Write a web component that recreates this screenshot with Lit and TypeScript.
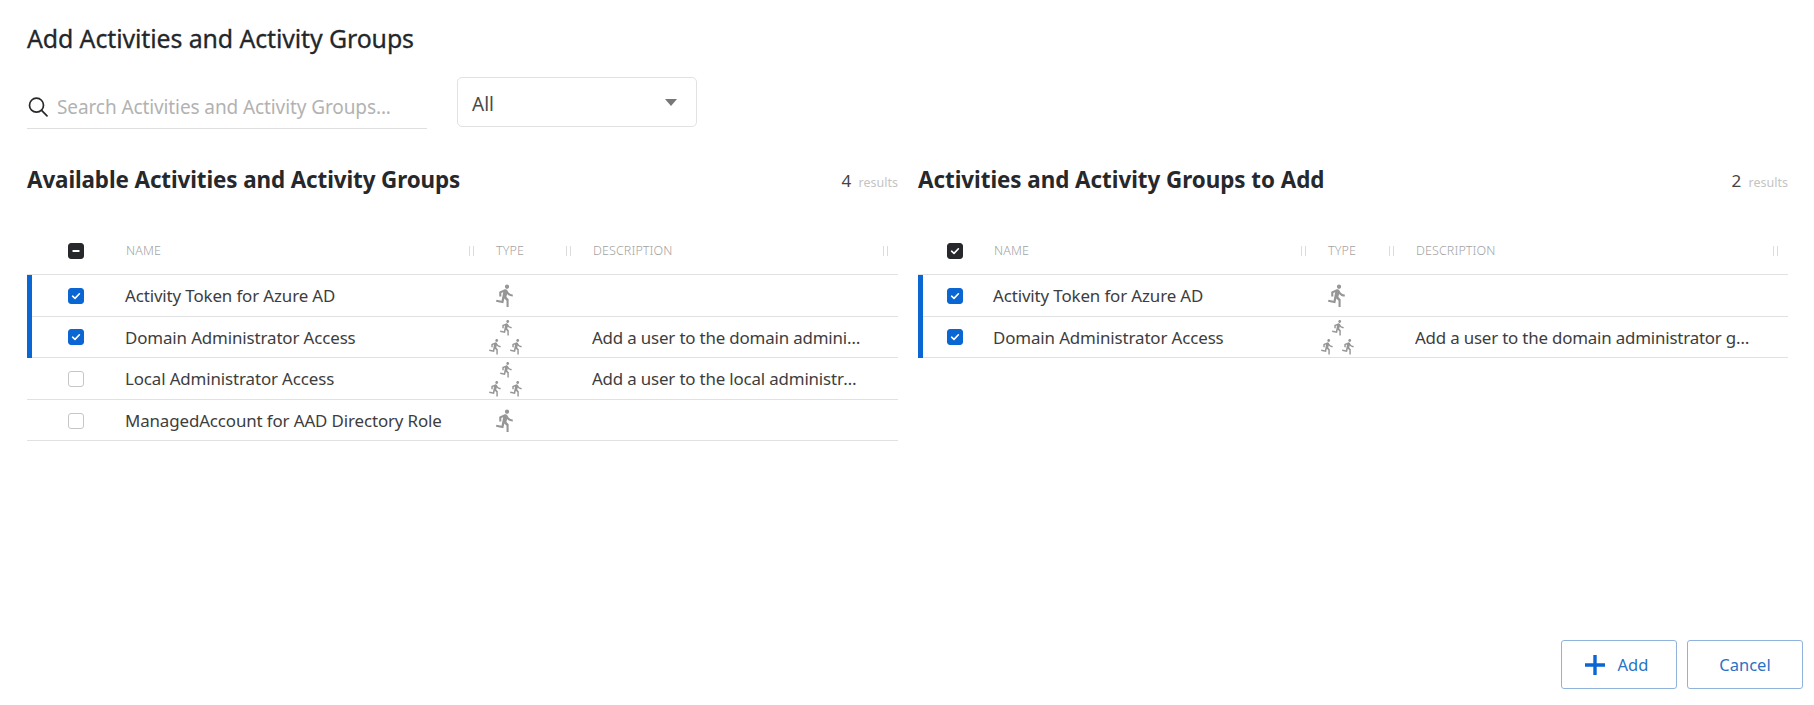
import { LitElement, html, css, svg } from "lit";
import { customElement } from "lit/decorators.js";

const RUN = "M13.49 5.48c1.1 0 2-.9 2-2s-.9-2-2-2-2 .9-2 2 .9 2 2 2zm-3.6 13.9l1-4.4 2.1 2v6h2v-7.5l-2.1-2 .6-3c1.3 1.5 3.3 2.5 5.5 2.5v-2c-1.9 0-3.5-1-4.3-2.4l-1-1.6c-.4-.6-1-1-1.7-1-.3 0-.5.1-.8.1l-5.2 2.2v4.7h2v-3.4l1.8-.7-1.6 8.1-4.9-1-.4 2 7 1.4z";

const runner = html`<svg class="run" viewBox="0 0 24 24" width="25" height="25" fill="#969696"><path d=${RUN}></path></svg>`;
const group = html`<svg class="runs" viewBox="0 0 38 38" width="38" height="38" fill="#969696">
  ${svg`<g transform="translate(11 1) scale(.72)"><path d=${RUN}></path></g>
  <g transform="translate(0 20) scale(.72)"><path d=${RUN}></path></g>
  <g transform="translate(21 20) scale(.72)"><path d=${RUN}></path></g>`}
</svg>`;

type Row = { name: string; type: "one" | "many"; desc: string; checked: boolean };

const AVAILABLE: Row[] = [
  { name: "Activity Token for Azure AD", type: "one", desc: "", checked: true },
  { name: "Domain Administrator Access", type: "many", desc: "Add a user to the domain administrator group", checked: true },
  { name: "Local Administrator Access", type: "many", desc: "Add a user to the local administrator group", checked: false },
  { name: "ManagedAccount for AAD Directory Role", type: "one", desc: "", checked: false },
];

@customElement("activity-table")
class ActivityTable extends LitElement {
  static properties = { rows: { attribute: false }, head: {}, variant: {} };
  rows: Row[] = [];
  head = "none";
  variant = "left";

  static styles = css`
    :host { display: block; font-family: "Noto Sans", "Open Sans", sans-serif; }
    .head, .row { display: grid; align-items: center; box-sizing: border-box; border-bottom: 1px solid #dfe1e3; }
    .left .head, .left .row { grid-template-columns: 98px 370px 97px 1fr; }
    .right .head, .right .row { grid-template-columns: 75px 334px 88px 1fr; }
    .head { height: 47px; padding-bottom: 1px; }
    .row { height: 41.6px; position: relative; padding-top: 1px; }
    .sel::before { content: ""; position: absolute; left: 0; top: 0; bottom: -1px; width: 5px; background: #0a66d2; }
    .chk { width: 16px; height: 16px; box-sizing: border-box; border-radius: 3px; border: 1px solid #c6c6c6; background: #fff; display: flex; align-items: center; justify-content: center; }
    .chk.on { background: #0a66d2; border-color: #0a66d2; }
    .chk.dark { background: #26282b; border-color: #26282b; }
    .left .cc { padding-left: 41px; }
    .right .cc { padding-left: 29px; }
    .hc { display: flex; justify-content: space-between; align-items: center; font-size: 12.5px; letter-spacing: .1px; color: #a3a3a3; padding-left: 1px; padding-right: 21px; font-weight: 300; min-width: 0; }
    .hc.last { padding-right: 10px; }
    .grip { width: 3px; height: 10px; border-left: 1px solid #dcdcdc; border-right: 1px solid #dcdcdc; }
    .nm { font-size: 16.9px; color: #3d3d3d; letter-spacing: -.12px; white-space: nowrap; min-width: 0; }
    .ty { display: flex; align-items: center; height: 100%; }
    .run { margin-left: -2px; display: block; }
    .runs { margin-left: -8px; display: block; }
    .ds { font-size: 16.9px; color: #3d3d3d; white-space: nowrap; overflow: hidden; text-overflow: ellipsis; min-width: 0; }
    .left .ds { padding-right: 36px; letter-spacing: -.17px; }
    .right .ds { padding-right: 34px; letter-spacing: -.19px; }
  `;

  private box(on: boolean) {
    return html`<div class="chk ${on ? "on" : ""}">
      ${on ? html`<svg width="10" height="10" viewBox="0 0 10 10" fill="none" stroke="#fff" stroke-width="1.6" stroke-linecap="round" stroke-linejoin="round"><path d="M1.6 5.2 4 7.4 8.4 2.8"></path></svg>` : ""}
    </div>`;
  }

  render() {
    return html`<div class=${this.variant}>
      <div class="head">
        <div class="cc"><div class="chk dark">
          ${this.head === "mixed"
            ? html`<svg width="10" height="10" viewBox="0 0 10 10"><rect x="1.5" y="4" width="7" height="2" rx=".5" fill="#fff"></rect></svg>`
            : html`<svg width="10" height="10" viewBox="0 0 10 10" fill="none" stroke="#fff" stroke-width="1.6" stroke-linecap="round" stroke-linejoin="round"><path d="M1.6 5.2 4 7.4 8.4 2.8"></path></svg>`}
        </div></div>
        <div class="hc"><span>NAME</span><span class="grip"></span></div>
        <div class="hc"><span>TYPE</span><span class="grip"></span></div>
        <div class="hc last"><span>DESCRIPTION</span><span class="grip"></span></div>
      </div>
      ${this.rows.map(
        (r) => html`<div class="row ${r.checked ? "sel" : ""}">
          <div class="cc">${this.box(r.checked)}</div>
          <div class="nm">${r.name}</div>
          <div class="ty">${r.type === "one" ? runner : group}</div>
          <div class="ds">${r.desc}</div>
        </div>`
      )}
    </div>`;
  }
}

@customElement("app-root")
class AppRoot extends LitElement {
  static styles = css`
    :host { display: flex; flex-direction: column; box-sizing: border-box; height: 705px; padding: 0 11px 16px 27px; background: #fff; font-family: "Noto Sans", "Open Sans", sans-serif; color: #222; overflow: hidden; }
    h1 { margin: 0; font-size: 24.9px; line-height: 32px; font-weight: 400; color: #23272b; padding-top: 22px; letter-spacing: -.1px; -webkit-text-stroke: .3px #23272b; }
    .filters { display: flex; align-items: flex-end; gap: 30px; margin-top: 23px; }
    .search { width: 400px; height: 46px; box-sizing: border-box; border-bottom: 1px solid #dfdfdf; display: flex; align-items: center; gap: 8px; padding-top: 2px; }
    .ph { font-size: 19px; color: #b2b2b2; letter-spacing: -.1px; white-space: nowrap; }
    .select { width: 240px; height: 50px; box-sizing: border-box; border: 1px solid #e2e2e2; border-radius: 5px; display: flex; align-items: center; justify-content: space-between; padding: 3px 19px 0 14px; font-size: 19px; color: #4a4a4a; margin-bottom: 2px; }
    .caret { width: 0; height: 0; border-left: 6px solid transparent; border-right: 6px solid transparent; border-top: 7px solid #777; margin-top: -3px; }
    .panels { display: grid; grid-template-columns: 871px 870px; gap: 20px; margin-top: 33px; }
    .phead { display: flex; justify-content: space-between; align-items: baseline; height: 36px; line-height: 36px; }
    h2 { margin: 0; font-size: 22.4px; font-weight: 700; color: #26282b; letter-spacing: -.1px; }
    section:last-child h2 { letter-spacing: -.04px; }
    .count { font-size: 17px; color: #444; position: relative; top: -1px; }
    .count small { font-size: 12.5px; color: #c4c4c4; margin-left: 3px; }
    .panels activity-table { margin-top: 30px; }
    .spacer { flex: 1; }
    .actions { display: flex; justify-content: flex-end; gap: 10px; }
    .btn { width: 116px; height: 49px; box-sizing: border-box; background: #fff; border: 1px solid #8fb3dd; border-radius: 3px; color: #2a72c4; font: 400 16.5px "Noto Sans", "Open Sans", sans-serif; display: flex; align-items: center; justify-content: center; gap: 13px; padding: 0; }
    .btn svg { margin-left: -5px; }
  `;

  render() {
    const chosen = AVAILABLE.filter((r) => r.checked);
    return html`
      <h1>Add Activities and Activity Groups</h1>
      <div class="filters">
        <div class="search">
          <svg width="22" height="22" viewBox="0 0 22 22" fill="none" stroke="#26282b" stroke-width="1.7" stroke-linecap="round"><circle cx="9.5" cy="9.2" r="7"></circle><path d="M14.6 14.4 20 19.8"></path></svg>
          <span class="ph">Search Activities and Activity Groups...</span>
        </div>
        <div class="select"><span>All</span><span class="caret"></span></div>
      </div>
      <div class="panels">
        <section>
          <div class="phead"><h2>Available Activities and Activity Groups</h2><span class="count">4 <small>results</small></span></div>
          <activity-table .rows=${AVAILABLE} head="mixed" variant="left"></activity-table>
        </section>
        <section>
          <div class="phead"><h2>Activities and Activity Groups to Add</h2><span class="count">2 <small>results</small></span></div>
          <activity-table .rows=${chosen} head="all" variant="right"></activity-table>
        </section>
      </div>
      <div class="spacer"></div>
      <div class="actions">
        <button class="btn"><svg width="20" height="20" viewBox="0 0 20 20"><path d="M10 0v20M0 10h20" stroke="#0a66d2" stroke-width="3.4"></path></svg>Add</button>
        <button class="btn">Cancel</button>
      </div>
    `;
  }
}
